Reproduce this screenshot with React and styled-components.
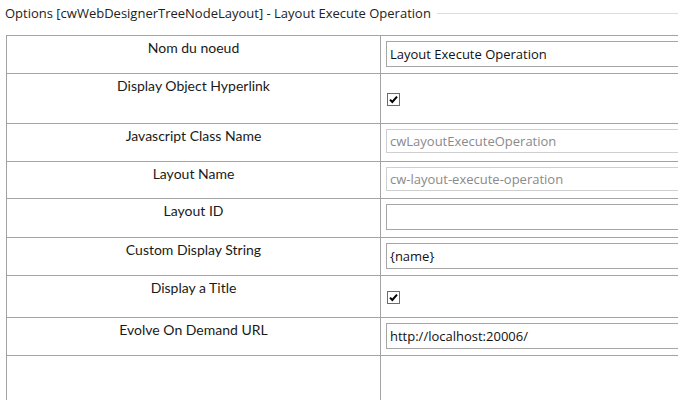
import React from "react";
import styled, { createGlobalStyle } from "styled-components";

const GlobalStyle = createGlobalStyle`
  html, body {
    margin: 0;
    padding: 0;
    background: #ffffff;
    overflow: hidden;
  }
  body {
    width: 678px;
    height: 400px;
  }
`;

const Page = styled.div`
  width: 678px;
  height: 400px;
  overflow: hidden;
  font-family: "Open Sans", "Noto Sans", sans-serif;
`;

const Legend = styled.div`
  display: flex;
  align-items: center;
  gap: 6px;
  height: 25px;
  padding-left: 5px;
  font-size: 13px;
  color: #222;
  white-space: nowrap;
`;

const LegendLine = styled.div`
  flex: 1;
  height: 1px;
  background: #dcdcdc;
  margin-top: 1px;
`;

const Table = styled.table`
  margin: 10px 0 0 6px;
  width: 760px;
  border-collapse: collapse;
  table-layout: fixed;
`;

const Row = styled.tr`
  height: ${(p) => p.$h}px;
`;

const Label = styled.td`
  width: 365px;
  border: 1px solid #a3a3a3;
  vertical-align: top;
  text-align: center;
  padding: 3px 4px 0;
  font-family: Lato, "Liberation Sans", sans-serif;
  font-size: 14px;
  color: #1a1a1a;
`;

const Value = styled.td`
  border: 1px solid #a3a3a3;
  vertical-align: top;
  padding: 5px 0 0 5px;
`;

const Field = styled.div`
  box-sizing: border-box;
  height: ${(p) => p.$h || 26}px;
  width: 100%;
  border: 1px solid ${(p) => (p.$disabled ? "#cfcfcf" : "#a6a6a6")};
  padding: 0 3px;
  display: flex;
  align-items: center;
  font-family: "Open Sans", "Noto Sans", sans-serif;
  font-size: 13px;
  color: ${(p) => (p.$disabled ? "#8a8a8a" : "#111")};
  white-space: nowrap;
`;

const Check = styled.span`
  display: inline-flex;
  box-sizing: border-box;
  width: 13px;
  height: 13px;
  border: 1px solid #6b6b6b;
  background: #fff;
  align-items: center;
  justify-content: center;
  margin: ${(p) => p.$mt}px 0 0 1px;
`;

const CheckBox = ({ mt }) => (
  <Check $mt={mt}>
    <svg width="9" height="9" viewBox="0 0 9 9">
      <path d="M1 4.6 L3.3 7 L8 1.6" fill="none" stroke="#000" strokeWidth="2" />
    </svg>
  </Check>
);

const rows = [
  { label: "Nom du noeud", h: 38, field: "Layout Execute Operation" },
  { label: "Display Object Hyperlink", h: 50, check: 14 },
  { label: "Javascript Class Name", h: 38, field: "cwLayoutExecuteOperation", disabled: true, fh: 24 },
  { label: "Layout Name", h: 37, field: "cw-layout-execute-operation", disabled: true, fh: 24 },
  { label: "Layout ID", h: 39, field: "" },
  { label: "Custom Display String", h: 38, field: "{name}" },
  { label: "Display a Title", h: 42, check: 10 },
  { label: "Evolve On Demand URL", h: 38, field: "http://localhost:20006/" },
  { label: "", h: 60 },
];

export default function App() {
  return (
    <Page>
      <GlobalStyle />
      <Legend>
        <span>Options [cwWebDesignerTreeNodeLayout] - Layout Execute Operation</span>
        <LegendLine />
      </Legend>
      <Table>
        <tbody>
          {rows.map((r, i) => (
            <Row key={i} $h={r.h}>
              <Label>{r.label}</Label>
              <Value>
                {r.field !== undefined && (
                  <Field $disabled={r.disabled} $h={r.fh}>
                    {r.field}
                  </Field>
                )}
                {r.check !== undefined && <CheckBox mt={r.check} />}
              </Value>
            </Row>
          ))}
        </tbody>
      </Table>
    </Page>
  );
}
